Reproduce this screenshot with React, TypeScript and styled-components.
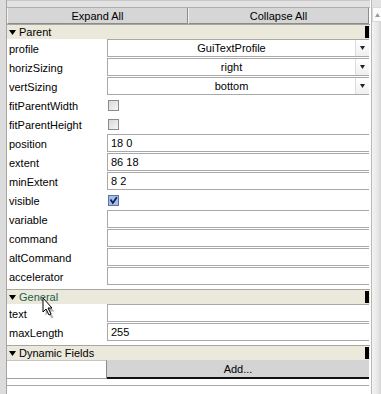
import React from "react";
import styled, { createGlobalStyle } from "styled-components";

const Global = createGlobalStyle`
  html, body { margin: 0; padding: 0; background: #ffffff; }
  body { font-family: "Liberation Sans", Arial, sans-serif; font-size: 11px; color: #000; }
`;

const Frame = styled.div`
  width: 381px;
  height: 394px;
  display: flex;
  overflow: hidden;
  background: #ffffff;
  position: relative;
`;

const LeftEdge = styled.div`
  width: 6px;
  flex: none;
  background: #dcdcdc;
  border-right: 1px solid #a4a4a4;
`;

const Main = styled.div`
  width: 363px;
  flex: none;
  display: flex;
  flex-direction: column;
`;

const TopStrip = styled.div`
  height: 8px;
  box-sizing: border-box;
  background: #e2e2e2;
  border-top: 1px solid #c8c8c8;
  border-bottom: 1px solid #b0b0b0;
`;

const ButtonBar = styled.div`
  display: flex;
  height: 16px;
  padding-right: 1px;
`;

const BarButton = styled.div`
  flex: 1;
  box-sizing: border-box;
  background: #d6d6d6;
  border-right: 1px solid #8c8c8c;
  border-bottom: 1px solid #8c8c8c;
  border-left: 1px solid #f2f2f2;
  display: flex;
  align-items: center;
  justify-content: center;
  font-size: 11px;
`;

const Section = styled.div<{ $gap?: number }>`
  display: flex;
  flex-direction: column;
  margin-bottom: ${(p) => p.$gap ?? 0}px;
`;

const Header = styled.div<{ $hover?: boolean }>`
  height: 15px;
  box-sizing: border-box;
  border-top: 1px solid #a9a79d;
  background: #ebe8dc;
  display: flex;
  align-items: center;
  padding-left: 2px;
  color: ${(p) => (p.$hover ? "#1f5e4c" : "#000")};
  font-size: 11px;
`;

const HeaderTitle = styled.span`
  flex: 1;
  margin-left: 3px;
`;

const HeaderMark = styled.span`
  width: 4px;
  height: 12px;
  background: #000;
  margin-right: 1px;
`;

const Row = styled.div`
  display: flex;
  height: 19px;
  align-items: stretch;
`;

const Label = styled.div`
  width: 100px;
  flex: none;
  padding-left: 2px;
  display: flex;
  align-items: center;
  box-sizing: border-box;
`;

const Field = styled.div`
  flex: 1;
  height: 18px;
  box-sizing: border-box;
  border: 1px solid #a9a9a9;
  border-right: none;
  background: #fff;
  display: flex;
  align-items: center;
  padding-left: 3px;
  margin-right: 1px;
`;

const DropField = styled.div`
  flex: 1;
  height: 18px;
  box-sizing: border-box;
  border: 1px solid #a9a9a9;
  border-right: none;
  background: #fff;
  display: flex;
  margin-right: 1px;
`;

const DropText = styled.div`
  flex: 1;
  display: flex;
  align-items: center;
  justify-content: center;
`;

const DropButton = styled.div`
  width: 13px;
  border-left: 1px solid #dcdcdc;
  background: linear-gradient(#ffffff, #f0f0f0);
  display: flex;
  align-items: center;
  justify-content: center;
`;

const CheckCell = styled.div`
  flex: 1;
  display: flex;
  align-items: center;
  padding-left: 1px;
`;

const Box = styled.div`
  width: 11px;
  height: 11px;
  box-sizing: border-box;
  border: 1px solid #8a8a8a;
  background: linear-gradient(135deg, #d8d8d8, #f6f6f6);
`;

const AddRow = styled.div`
  display: flex;
  height: 19px;
`;

const AddBlank = styled.div`
  width: 100px;
  box-sizing: border-box;
  border-top: 1px solid #c4c4c4;
  border-bottom: 1px solid #a0a0a0;
  border-right: 1px solid #8a8a8a;
  background: #fff;
`;

const AddButton = styled.div`
  flex: 1;
  margin-right: 1px;
  background: #d4d4d4;
  border-bottom: 2px solid #111;
  display: flex;
  align-items: center;
  justify-content: center;
  box-sizing: border-box;
  padding-top: 1px;
`;

const Tail = styled.div`
  margin-top: 6px;
  margin-right: 1px;
  border-top: 1px solid #a9a9a9;
`;

const Scroll = styled.div`
  width: 11px;
  flex: none;
  box-sizing: border-box;
  border-left: 1px solid #b8b8b8;
  background: linear-gradient(90deg, #f4f4f4, #e6e6e6 60%, #cfcfcf);
  display: flex;
  flex-direction: column;
  margin-left: 1px;
`;

const ScrollTop = styled.div`
  height: 7px;
  background: #e2e2e2;
`;

const ScrollUp = styled.div`
  height: 15px;
  background: #fbfbfb;
  border: 1px solid #d8d8d8;
  box-sizing: border-box;
  display: flex;
  align-items: center;
  justify-content: center;
`;

const Cursor = styled.svg`
  position: absolute;
  left: 42px;
  top: 297px;
`;

const Tri = () => (
  <svg width="7" height="5" viewBox="0 0 7 5">
    <polygon points="0,0 7,0 3.5,5" fill="#000" />
  </svg>
);

const Arrow = () => (
  <svg width="5" height="4" viewBox="0 0 5 4">
    <polygon points="0,0 5,0 2.5,4" fill="#222" />
  </svg>
);

const Checked = () => (
  <svg width="11" height="11" viewBox="0 0 11 11">
    <rect x="0.5" y="0.5" width="10" height="10" fill="#a9bde2" stroke="#5a73a8" />
    <path d="M2.5 4.5 L4.8 8 L8.8 2.2" stroke="#0c1f66" strokeWidth="1.8" fill="none" />
  </svg>
);

type Item =
  | { l: string; t: "drop"; v: string }
  | { l: string; t: "check"; v: boolean }
  | { l: string; t: "text"; v: string };

const parent: Item[] = [
  { l: "profile", t: "drop", v: "GuiTextProfile" },
  { l: "horizSizing", t: "drop", v: "right" },
  { l: "vertSizing", t: "drop", v: "bottom" },
  { l: "fitParentWidth", t: "check", v: false },
  { l: "fitParentHeight", t: "check", v: false },
  { l: "position", t: "text", v: "18 0" },
  { l: "extent", t: "text", v: "86 18" },
  { l: "minExtent", t: "text", v: "8 2" },
  { l: "visible", t: "check", v: true },
  { l: "variable", t: "text", v: "" },
  { l: "command", t: "text", v: "" },
  { l: "altCommand", t: "text", v: "" },
  { l: "accelerator", t: "text", v: "" },
];

const general: Item[] = [
  { l: "text", t: "text", v: "" },
  { l: "maxLength", t: "text", v: "255" },
];

const PropRow = ({ item }: { item: Item }) => (
  <Row>
    <Label>{item.l}</Label>
    {item.t === "drop" && (
      <DropField>
        <DropText>{item.v}</DropText>
        <DropButton>
          <Arrow />
        </DropButton>
      </DropField>
    )}
    {item.t === "check" && <CheckCell>{item.v ? <Checked /> : <Box />}</CheckCell>}
    {item.t === "text" && <Field>{item.v}</Field>}
  </Row>
);

export default function App() {
  return (
    <>
      <Global />
      <Frame>
        <LeftEdge />
        <Main>
          <TopStrip />
          <ButtonBar>
            <BarButton>Expand All</BarButton>
            <BarButton>Collapse All</BarButton>
          </ButtonBar>
          <Section $gap={3}>
            <Header>
              <Tri />
              <HeaderTitle>Parent</HeaderTitle>
              <HeaderMark />
            </Header>
            {parent.map((it) => (
              <PropRow key={it.l} item={it} />
            ))}
          </Section>
          <Section $gap={3}>
            <Header $hover>
              <Tri />
              <HeaderTitle>General</HeaderTitle>
              <HeaderMark />
            </Header>
            {general.map((it) => (
              <PropRow key={it.l} item={it} />
            ))}
          </Section>
          <Section>
            <Header>
              <Tri />
              <HeaderTitle>Dynamic Fields</HeaderTitle>
              <HeaderMark />
            </Header>
            <AddRow>
              <AddBlank />
              <AddButton>Add...</AddButton>
            </AddRow>
            <Tail />
          </Section>
        </Main>
        <Scroll>
          <ScrollTop />
          <ScrollUp>
            <svg width="5" height="4" viewBox="0 0 5 4">
              <polygon points="2.5,0 5,4 0,4" fill="#9a9a9a" />
            </svg>
          </ScrollUp>
        </Scroll>
        <Cursor width="14" height="22" viewBox="0 0 14 22">
          <path d="M2 3 L2 17 L5 14 L8 20 L10 19 L7 13 L11 13 Z" fill="#555" opacity="0.45" transform="translate(1.5,1.5)" />
          <path d="M1 1 L1 15 L4 12 L7 18 L9 17 L6 11 L10 11 Z" fill="#fff" stroke="#000" strokeWidth="1" />
        </Cursor>
      </Frame>
    </>
  );
}
